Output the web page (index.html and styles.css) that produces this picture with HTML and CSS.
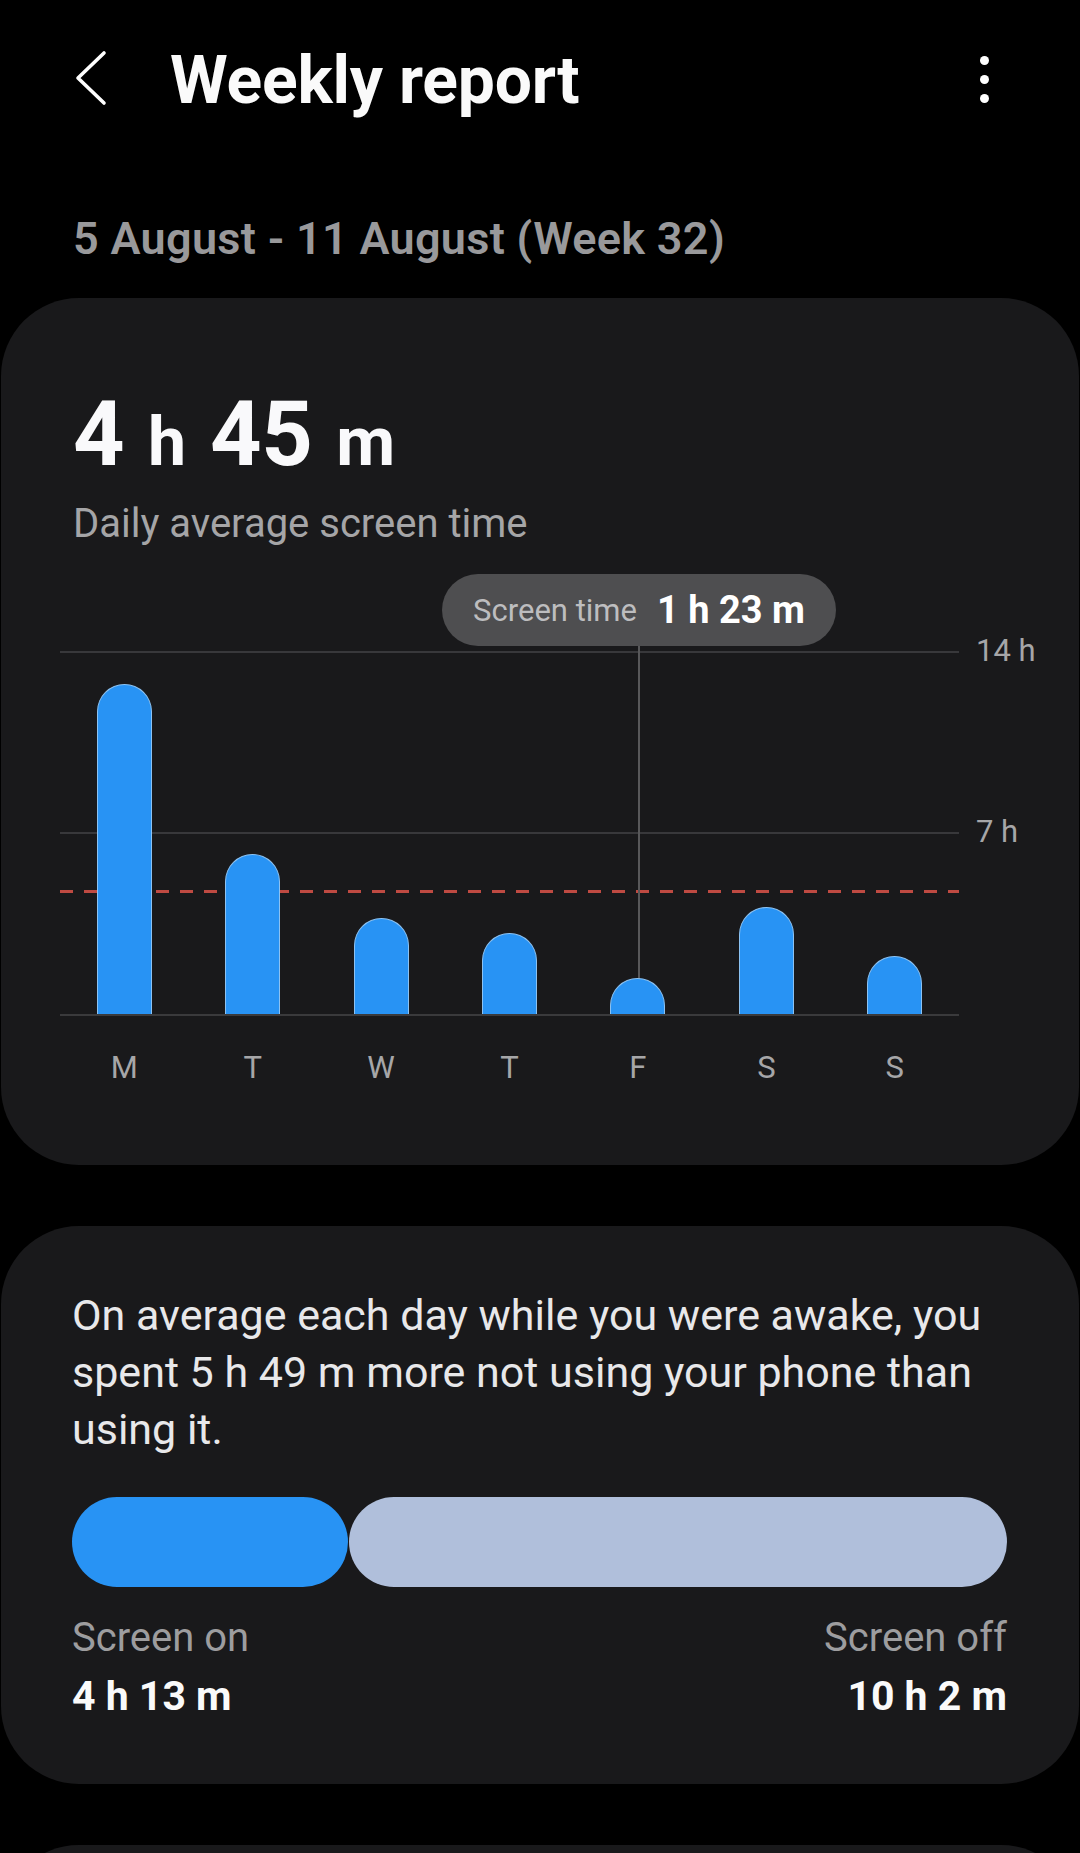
FILE: index.html
```html
<!DOCTYPE html>
<html lang="en">
<head>
<meta charset="utf-8">
<title>Weekly report</title>
<link rel="stylesheet" href="styles.css">
</head>
<body>
<header class="appbar">
  <svg class="back" viewBox="0 0 34 56" width="34" height="56" aria-hidden="true">
    <polyline points="29,3 3,28 29,53" fill="none" stroke="#fff" stroke-width="3.6" stroke-linecap="round" stroke-linejoin="round"/>
  </svg>
  <h1 class="title">Weekly report</h1>
  <div class="kebab" aria-hidden="true"><span></span><span></span><span></span></div>
</header>

<p class="range">5 August - 11 August (Week 32)</p>

<section class="card card-chart">
  <div class="avg"><span class="num">4</span> <span class="unit">h</span> <span class="num">45</span> <span class="unit">m</span></div>
  <p class="avg-label">Daily average screen time</p>

  <div class="chart">
    <div class="plot">
      <div class="grid grid-top"><span class="axis">14 h</span></div>
      <div class="grid grid-mid"><span class="axis">7 h</span></div>
      <div class="avg-line"></div>
      <div class="tooltip"><span class="tt-label">Screen time</span><span class="tt-value">1 h 23 m</span></div>
      <div class="tt-stem"></div>
      <div class="col"><div class="bar" style="height:330px"></div></div>
      <div class="col"><div class="bar" style="height:160px"></div></div>
      <div class="col"><div class="bar" style="height:96px"></div></div>
      <div class="col"><div class="bar" style="height:81px"></div></div>
      <div class="col"><div class="bar" style="height:36px"></div></div>
      <div class="col"><div class="bar" style="height:107px"></div></div>
      <div class="col"><div class="bar" style="height:58px"></div></div>
    </div>
    <div class="days">
      <span>M</span><span>T</span><span>W</span><span>T</span><span>F</span><span>S</span><span>S</span>
    </div>
  </div>
</section>

<section class="card card-usage">
  <p class="summary">On average each day while you were awake, you spent 5 h 49 m more not using your phone than using it.</p>
  <div class="split">
    <div class="seg seg-on"></div>
    <div class="seg seg-off"></div>
  </div>
  <div class="legend">
    <div class="leg">
      <div class="leg-label">Screen on</div>
      <div class="leg-value">4 h 13 m</div>
    </div>
    <div class="leg leg-right">
      <div class="leg-label">Screen off</div>
      <div class="leg-value">10 h 2 m</div>
    </div>
  </div>
</section>

<section class="card card-next"></section>
</body>
</html>
```

FILE: styles.css
```css
* { box-sizing: border-box; }

html, body {
  margin: 0;
  padding: 0;
  background: #000;
}

body {
  font-family: Roboto, "Noto Sans", "Liberation Sans", sans-serif;
  color: #fafafa;
  width: 1080px;
  overflow: hidden;
}

/* App bar */
.appbar {
  display: flex;
  align-items: center;
  height: 158px;
  padding: 0 0 0 75px;
}

.back {
  display: block;
  flex: none;
  margin-top: -2px;
}

.title {
  margin: 4px 0 0 61px;
  font-size: 66px;
  line-height: 66px;
  font-weight: 700;
  letter-spacing: -0.2px;
  color: #fafafa;
  flex: 1;
}

.kebab {
  display: flex;
  flex-direction: column;
  align-items: center;
  gap: 10px;
  width: 40px;
  margin-right: 76px;
}

.kebab span {
  width: 9px;
  height: 9px;
  border-radius: 50%;
  background: #fff;
}

/* Date range */
.range {
  margin: 55px 0 33px 73px;
  font-size: 45px;
  line-height: 52px;
  font-weight: 600;
  color: #99999b;
  letter-spacing: 0.3px;
}

/* Cards */
.card {
  background: #19191b;
  border-radius: 78px;
  margin: 0 1px;
}

.card-chart {
  padding: 92px 0 77px 0;
}

.avg {
  margin-left: 72px;
  line-height: 90px;
  height: 90px;
  font-size: 68px;
  word-spacing: 7px;
  font-weight: 700;
  color: #f9f9fb;
  white-space: nowrap;
}

.avg .num {
  font-size: 90px;
  letter-spacing: -0.5px;
}

.avg .unit {
  font-size: 68px;
}

.avg-label {
  margin: 22px 0 0 72px;
  font-size: 40px;
  line-height: 44px;
  color: #a5a5a7;
}

/* Chart */
.chart {
  margin: 28px 0 0 59px;
  width: 899px;
  padding-top: 78px;
}

.plot {
  position: relative;
  height: 364px;
  display: grid;
  grid-template-columns: repeat(7, 1fr);
  align-items: end;
  border-bottom: 2px solid #3a3a3c;
}

.col {
  display: flex;
  justify-content: center;
  align-items: flex-end;
  height: 100%;
}

.bar {
  width: 55px;
  background: #2893f4;
  border: 1.5px solid #8cc2f2;
  border-bottom: 0;
  border-radius: 28px 28px 0 0;
  position: relative;
  z-index: 2;
}

.grid {
  position: absolute;
  left: 0;
  right: 0;
  height: 2px;
  background: #38383b;
}

.grid-top { top: -1px; }
.grid-mid { top: 180px; }

.axis {
  position: absolute;
  left: 916px;
  top: -20px;
  font-size: 31px;
  line-height: 40px;
  color: #a6a6a8;
  white-space: nowrap;
}

.avg-line {
  position: absolute;
  left: 0;
  right: 0;
  top: 238px;
  height: 3px;
  background: repeating-linear-gradient(90deg, #bf4a42 0 13px, transparent 13px 24px);
  z-index: 1;
}

.tooltip {
  position: absolute;
  left: 382px;
  top: -78px;
  width: 394px;
  height: 72px;
  border-radius: 36px;
  background: #4e4e50;
  display: flex;
  align-items: center;
  justify-content: center;
  gap: 20px;
  z-index: 3;
}

.tt-label {
  font-size: 31px;
  color: #bdbdbf;
}

.tt-value {
  font-size: 38px;
  font-weight: 700;
  color: #fff;
}

.tt-stem {
  position: absolute;
  left: 578px;
  top: -6px;
  width: 2px;
  height: 334px;
  background: #58585a;
  z-index: 1;
}

.days {
  display: grid;
  grid-template-columns: repeat(7, 1fr);
  margin-top: 32px;
  font-size: 31px;
  line-height: 40px;
  color: #a6a6a8;
  text-align: center;
}

/* Usage card */
.card-usage {
  margin-top: 61px;
  padding: 60.8px 72px 64px 71px;
}

.summary {
  margin: 0;
  font-size: 43px;
  line-height: 57px;
  color: #e8e8ea;
}

.split {
  display: flex;
  gap: 1px;
  height: 90px;
  margin-top: 39.5px;
}

.seg {
  height: 100%;
  border-radius: 45px;
}

.seg-on {
  width: 276px;
  background: #2893f4;
}

.seg-off {
  flex: 1;
  background: #b0bfdb;
}

.legend {
  display: flex;
  justify-content: space-between;
  margin-top: 28px;
}

.leg-right { text-align: right; }

.leg-label {
  font-size: 40px;
  line-height: 46px;
  color: #9d9d9f;
}

.leg-value {
  margin-top: 11px;
  font-size: 41px;
  line-height: 48px;
  font-weight: 700;
  color: #fafafa;
}

.card-next {
  margin-top: 61px;
  height: 200px;
}
```
